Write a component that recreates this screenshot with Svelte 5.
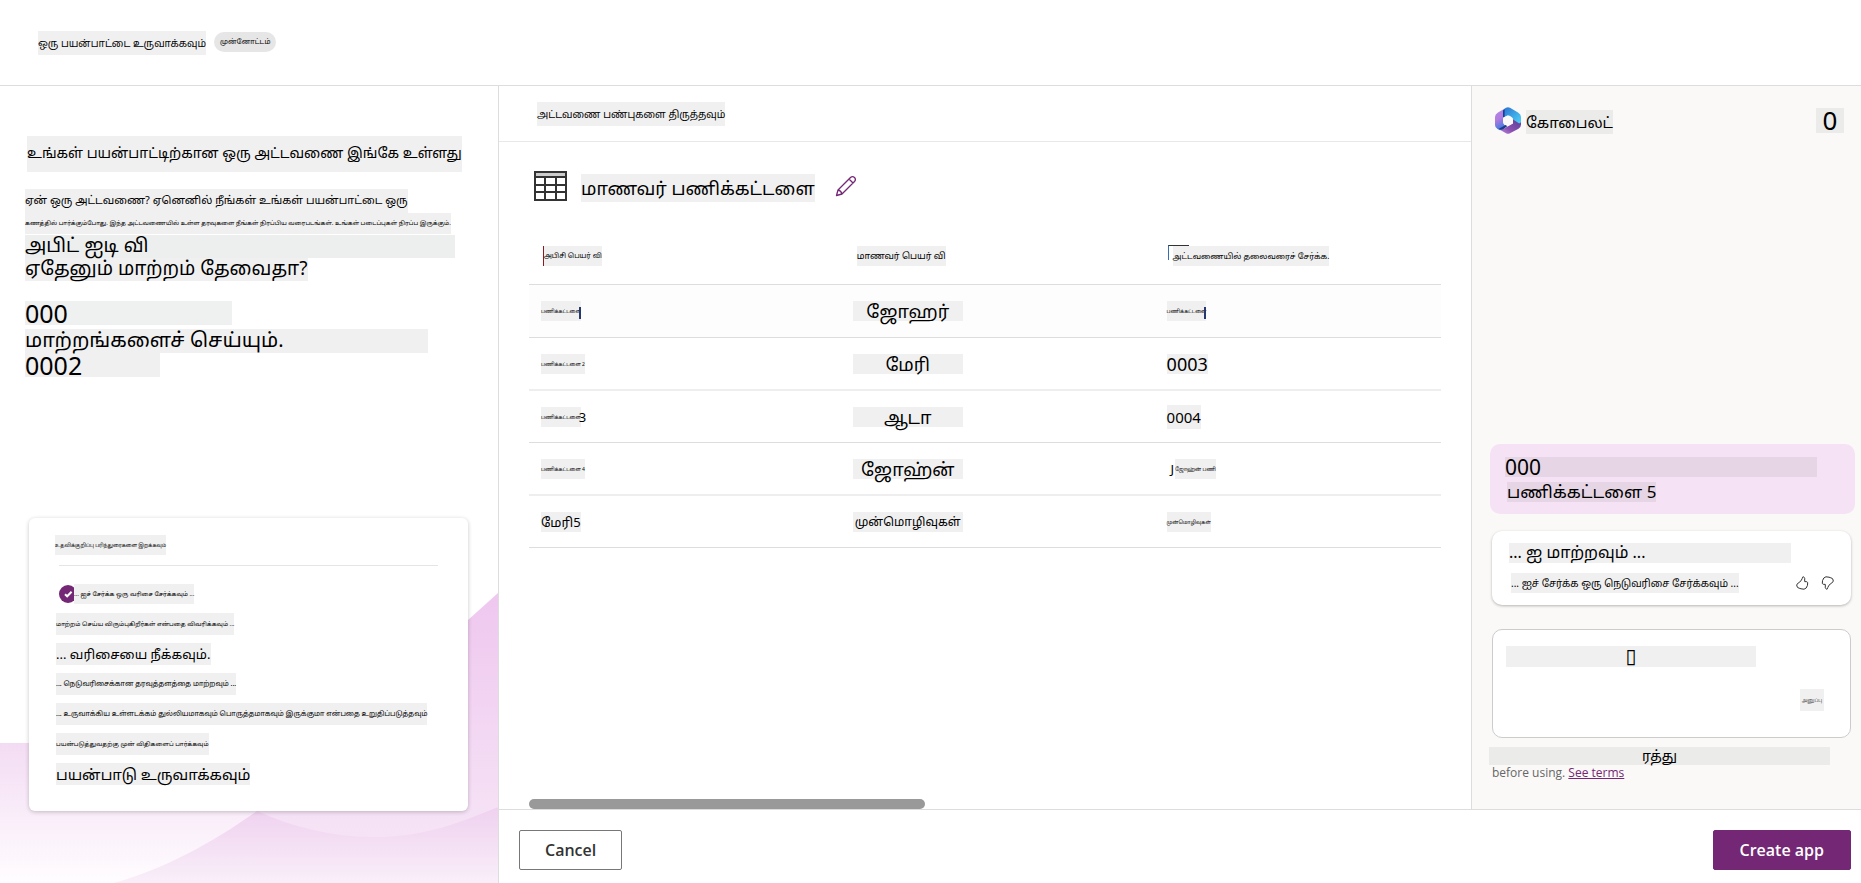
<script>
  const introBlocks = [
    { text: 'உங்கள் பயன்பாட்டிற்கான ஒரு அட்டவணை இங்கே உள்ளது', kind: 'intro-title' },
    { text: 'ஏன் ஒரு அட்டவணை? ஏனெனில் நீங்கள் உங்கள் பயன்பாட்டை ஒரு', kind: 'intro-lead' },
    { text: 'கணத்தில் பார்க்கும்போது. இந்த அட்டவணையில் உள்ள தரவுகளை நீங்கள் நிரப்பிய வரைபடங்கள். உங்கள் படைப்புகள் நிரப்ப இருக்கும்.', kind: 'intro-fine' },
    { text: 'அபிட் ஐடி வி', kind: 'intro-big wide' },
    { text: 'ஏதேனும் மாற்றம் தேவைதா?', kind: 'intro-big' },
    { text: '000', kind: 'intro-num first' },
    { text: 'மாற்றங்களைச் செய்யும்.', kind: 'intro-change' },
    { text: '0002', kind: 'intro-num' }
  ];

  const suggestions = [
    { text: 'மாற்றம் செய்ய விரும்புகிறீர்கள் என்பதை விவரிக்கவும் ...', size: 's6' },
    { text: '... வரிசையை நீக்கவும்.', size: 's13' },
    { text: '... நெடுவரிசைக்கான தரவுத்தளத்தை மாற்றவும் ...', size: 's7' },
    { text: '... உருவாக்கிய உள்ளடக்கம் துல்லியமாகவும் பொருத்தமாகவும் இருக்குமா என்பதை உறுதிப்படுத்தவும்', size: 's7 dark' },
    { text: 'பயன்படுத்துவதற்கு முன் விதிகளைப் பார்க்கவும்', size: 's6 dark' },
    { text: 'பயன்பாடு உருவாக்கவும்', size: 's15' }
  ];

  const rows = [
    { a: 'பணிக்கட்டளை', aSize: 's5', b: 'ஜோஹர்', bSize: 's18', c: 'பணிக்கட்டளை', cSize: 's5' },
    { a: 'பணிக்கட்டளை 2', aSize: 's5', b: 'மேரி', bSize: 's18', c: '0003', cSize: 's18' },
    { a: 'பணிக்கட்டளை', aSize: 's5', aTail: '3', b: 'ஆடா', bSize: 's18', c: '0004', cSize: 's15' },
    { a: 'பணிக்கட்டளை 4', aSize: 's5', b: 'ஜோஹ்ன்', bSize: 's18', cLead: 'J', c: 'ஜோஹ்ன் பணி', cSize: 's5' },
    { a: 'மேரி5', aSize: 's13', b: 'முன்மொழிவுகள்', bSize: 's12', c: 'முன்மொழிவுகள்', cSize: 's5' }
  ];

  let prompt = $state('▯');
  let added = $state(true);
</script>

<div class="page">
  <header class="topbar">
    <h1 class="chip s10 tall">ஒரு பயன்பாட்டை உருவாக்கவும்</h1>
    <span class="badge">முன்னோட்டம்</span>
  </header>

  <aside class="guide">
    <svg class="waves" viewBox="0 86 498 797" preserveAspectRatio="none" aria-hidden="true">
      <defs>
        <linearGradient id="w1" x1="0" y1="0" x2="0" y2="1">
          <stop offset="0" stop-color="#f3dcf3" /><stop offset="1" stop-color="#fffdff" />
        </linearGradient>
        <linearGradient id="w2" x1="0" y1="0" x2="0" y2="1">
          <stop offset="0" stop-color="#efc7ef" /><stop offset="1" stop-color="#f6e5f6" />
        </linearGradient>
        <linearGradient id="w3" x1="0" y1="0" x2="0" y2="1">
          <stop offset="0" stop-color="#efd1ef" /><stop offset="1" stop-color="#f9eff9" />
        </linearGradient>
      </defs>
      <path d="M0 743H340V883H0Z" fill="url(#w1)" />
      <path d="M498 593L468 620L257 811C300 860 420 860 498 807Z" fill="url(#w2)" />
      <path d="M257 811C212 843 164 869 114 883H498V807C460 823 425 836 380 837C335 838 295 828 257 811Z" fill="url(#w3)" />
    </svg>

    <div class="intro">
      {#each introBlocks as block}
        <p class="chip {block.kind}">{block.text}</p>
      {/each}
    </div>

    <section class="card">
      <h2 class="chip s5 dark">உதவிக்குறிப்பு பரிந்துரைகளை இறக்கவும்</h2>
      <hr />
      <label class="done">
        <input type="checkbox" bind:checked={added} />
        <svg class="tick" viewBox="0 0 18 18" aria-hidden="true"><path d="M6 9.2L8.2 11.3L12.6 6.8" /></svg>
        <span class="chip s6 dark">... ஐச் சேர்க்க ஒரு வரிசை சேர்க்கவும் ...</span>
      </label>
      <ul>
        {#each suggestions as item}
          <li><span class="chip {item.size}">{item.text}</span></li>
        {/each}
      </ul>
    </section>
  </aside>

  <main class="editor">
    <div class="tabs"><span class="chip s10 tall">அட்டவணை பண்புகளை திருத்தவும்</span></div>
    <div class="content">
      <div class="title">
        <svg class="grid-icon" viewBox="0 0 33 30" aria-hidden="true" shape-rendering="crispEdges">
          <path fill="#ccc" d="M2 2H31V5H2Z" />
          <path fill="#333" fill-rule="evenodd" d="M0 0H33V30H0ZM2 2V5H31V2ZM2 7V13H10V7ZM12 7V13H21V7ZM23 7V13H31V7ZM2 15V20H10V15ZM12 15V20H21V15ZM23 15V20H31V15ZM2 22V28H10V22ZM12 22V28H21V22ZM23 22V28H31V22Z" />
        </svg>
        <h2 class="chip table-name">மாணவர் பணிக்கட்டளை</h2>
        <button class="icon edit" aria-label="Edit">
          <svg viewBox="0 0 22 22" width="22" height="22"><path d="M1.500 20.500L3 15L15.500 2.500Q17.500 .700 19.500 2.500Q21.300 4.500 19.500 6.500L7 19L1.500 20.500ZM3 15Q6 15.500 7 19M14 4L18 8" /></svg>
        </button>
      </div>

      <table>
        <thead>
          <tr>
            <th scope="col"><span class="chip s7 caret">அபிசி பெயர் வி</span></th>
            <th scope="col"><span class="chip s9 dark">மாணவர் பெயர் வி</span></th>
            <th scope="col"><span class="chip s8 dark bracket">அட்டவணையில் தலைவரைச் சேர்க்க.</span></th>
          </tr>
        </thead>
        <tbody>
          {#each rows as row, i}
            <tr>
              <td>
                <div class="cell">
                  <span class="chip {row.aSize}" class:caret-end={i === 0}>{row.a}</span>
                  {#if row.aTail}<span class="digit tail">{row.aTail}</span>{/if}
                </div>
              </td>
              <td><span class="chip name {row.bSize}">{row.b}</span></td>
              <td>
                <div class="cell">
                  {#if row.cLead}<span class="digit lead">{row.cLead}</span>{/if}
                  <span class="chip {row.cSize}" class:caret-end={i === 0}>{row.c}</span>
                </div>
              </td>
            </tr>
          {/each}
        </tbody>
      </table>
      <div class="scroll"><div class="thumb"></div></div>
    </div>
  </main>

  <aside class="copilot">
    <div class="brand">
      <svg viewBox="0 0 26 27" width="26" height="27" aria-hidden="true">
        <defs>
          <linearGradient id="l1" x1="0" y1="0" x2=".3" y2="1"><stop offset="0" stop-color="#a88be8" /><stop offset=".5" stop-color="#b57ae0" /><stop offset="1" stop-color="#3f7be0" /></linearGradient>
          <linearGradient id="l2" x1="0" y1="0" x2="1" y2="1"><stop offset="0" stop-color="#2b6fd0" /><stop offset="1" stop-color="#4fd8f8" /></linearGradient>
          <linearGradient id="l3" x1="1" y1="0" x2="0" y2="1"><stop offset="0" stop-color="#5a3f98" /><stop offset=".6" stop-color="#8a50b0" /><stop offset="1" stop-color="#c08be8" /></linearGradient>
        </defs>
        <path d="M9 2L3 5.500Q0 7.200 0 10V18Q0 20.800 2.500 22L5 23.300L12 19.500Q8 18 8 14V6Q8 3.500 9 2Z" fill="url(#l1)" />
        <path d="M9 2L11 .700Q13 -.400 15 .700L23 5.500Q26 7.200 26 10V16.500Q25 19 22 17.500L18 13Q17 8.500 12.500 8.500L8 10.500V5Q8 3.200 9 2Z" fill="url(#l2)" />
        <path d="M26 15V17.500Q26 20.200 23.500 21.700L15 26.300Q13 27.400 11 26.300L3.500 22Q7 23 9.500 21.300L18 16.500V12.500L23.500 16Q25 17 26 15Z" fill="url(#l3)" />
        <path d="M8 3.600V10.500L9.600 9.700V2.300ZM3.500 22L10.600 18L12.200 19L8.500 22Q6 23.400 3.500 22Z" fill="#173d8c" />
        <path d="M13 8.500L17.700 11V16.300L13 19L8.300 16.300V11Z" fill="#faf9f8" />
      </svg>
      <h2 class="chip s15">கோபைலட்</h2>
      <button class="chip count" aria-label="Close">0</button>
    </div>

    <div class="chat">
      <div class="bubble">
        <span class="chip bubble-num">000</span>
        <span class="chip bubble-text">பணிக்கட்டளை 5</span>
      </div>

      <div class="reply">
        <span class="chip reply-title">... ஐ மாற்றவும் ...</span>
        <div class="reply-foot">
          <span class="chip s10">... ஐச் சேர்க்க ஒரு நெடுவரிசை சேர்க்கவும் ...</span>
          <div class="votes">
            <button class="icon" aria-label="Like"><svg viewBox="0 0 13 14" width="13" height="14"><path d="M7.500 .700Q6.300 .800 6.200 2.500Q5.500 5 3 6.500L1 8.200Q.500 8.800 .900 10L1.600 11.500Q3 12.200 5 12.800Q8.500 14 10.200 12Q12 9.500 11.700 6.500Q11.300 5.400 8.700 5.600Q9.300 1.500 7.500 .700Z" /></svg></button>
            <button class="icon" aria-label="Dislike"><svg class="down" viewBox="0 0 13 14" width="13" height="14"><path d="M7.500 .700Q6.300 .800 6.200 2.500Q5.500 5 3 6.500L1 8.200Q.500 8.800 .900 10L1.600 11.500Q3 12.200 5 12.800Q8.500 14 10.200 12Q12 9.500 11.700 6.500Q11.300 5.400 8.700 5.600Q9.300 1.500 7.500 .700Z" /></svg></button>
          </div>
        </div>
      </div>

      <div class="compose">
        <input type="text" aria-label="Message" bind:value={prompt} />
        <button class="chip send">அனுப்பு</button>
      </div>

      <div class="terms">
        <span class="chip terms-chip">ரத்து</span>
        <p>before using. <a href="#terms">See terms</a></p>
      </div>
    </div>
  </aside>

  <footer class="actions">
    <button class="btn">Cancel</button>
    <button class="btn primary">Create app</button>
  </footer>
</div>

<style>
  :global(body) { margin: 0; background: #fff; }
  .page, .page * { box-sizing: border-box; }
  .page {
    display: grid;
    grid-template: auto 1fr auto / minmax(0, 499fr) minmax(0, 972fr) minmax(0, 390fr);
    min-height: 100vh;
    overflow: hidden;
    font-family: "Noto Sans", "Noto Sans Tamil", "Open Sans", sans-serif;
    color: #000;
  }
  h1, h2, p, ul { margin: 0; padding: 0; font-weight: 400; }
  ul { list-style: none; }
  button { font-family: inherit; cursor: pointer; }

  .chip { display: block; width: fit-content; background: #f0f0f0; white-space: nowrap; line-height: 20px; border: 0; }
  .s5 { font-size: 5px; }
  .s6 { font-size: 6px; }
  .s7 { font-size: 7px; }
  .s8 { font-size: 8px; }
  .s9 { font-size: 9px; }
  .s10 { font-size: 10px; }
  .s12 { font-size: 12px; }
  .s13 { font-size: 13px; }
  .s15 { font-size: 15px; line-height: 24px; }
  .s18 { font-size: 18px; }
  .tall { line-height: 24px; }
  .dark { color: #000; }

  .topbar { grid-column: 1 / -1; display: flex; align-items: center; gap: 8px; height: 86px; padding: 0 38px; border-bottom: 1px solid #ddd; }
  .badge { padding: 0 6px; background: #e6e6e6; border-radius: 10px; font-size: 7px; line-height: 20px; margin-bottom: 2px; }

  .guide { position: relative; grid-row: 2 / 4; display: flex; flex-direction: column; justify-content: space-between; padding: 50px 30px 72px 25px; border-right: 1px solid #ddd; }
  .waves { position: absolute; inset: 0; width: 100%; height: 100%; }
  .intro, .card { position: relative; }
  .intro-title { margin: 0 0 17px 2px; padding-bottom: 3px; font-size: 14px; line-height: 33px; }
  .intro-lead { padding-bottom: 2px; font-size: 11px; line-height: 22px; }
  .intro-fine { min-width: 426px; margin-bottom: 1px; font-size: 6px; line-height: 21px; }
  .intro-big { padding-bottom: 2px; font-size: 19px; line-height: 21px; }
  .wide { width: 430px; background: #edefee; }
  .intro-num { width: 135px; font-size: 25px; line-height: 24px; }
  .first { width: 207px; margin: 20px 0 4px; background: #eff0f0; }
  .intro-change { width: 403px; padding-bottom: 2px; font-size: 20px; line-height: 22px; }

  .card { margin-left: 4px; padding: 17px 30px 26px 26px; background: #fff; border-radius: 6px; box-shadow: 0 1px 4px rgba(0, 0, 0, .22); }
  hr { height: 1px; margin: 10px 0 18px 4px; border: 0; background: #e5e5e5; }
  .done { position: relative; display: flex; align-items: center; margin: 0 0 9px 4px; }
  .done input { appearance: none; flex: none; width: 18px; height: 18px; margin: 0 -3px 0 0; border-radius: 50%; background: #742774; }
  .done input:not(:checked) { background: #ccc; }
  .tick { position: absolute; left: 0; width: 18px; height: 18px; fill: none; stroke: #fff; stroke-width: 2; }
  .done .chip { position: relative; }
  .card ul { display: flex; flex-direction: column; gap: 8px; padding-left: 1px; }
  .card li .chip { line-height: 22px; }

  .editor { display: flex; flex-direction: column; min-width: 0; }
  .tabs { display: flex; align-items: center; height: 56px; padding-left: 38px; border-bottom: 1px solid #e8e8e8; }
  .content { flex: 1; display: flex; flex-direction: column; padding: 26px 30px 0; }
  .title { display: flex; align-items: center; gap: 14px; height: 36px; padding-left: 5px; }
  .grid-icon { width: 33px; height: 30px; }
  .table-name { font-size: 18px; line-height: 28px; margin-top: 4px; }
  .icon { display: flex; padding: 0; border: 0; background: none; }
  .edit { margin-left: 6px; }
  .icon path { fill: none; stroke: #742774; stroke-width: 1.3; stroke-linejoin: round; }
  .votes .icon path { stroke: #333; stroke-width: 1; }

  table { width: 100%; margin-top: 25px; border-collapse: separate; border-spacing: 0; table-layout: fixed; }
  th, td { padding: 0 12px; border-bottom: 1px solid #ddd; text-align: left; font-weight: 400; }
  th { height: 56px; padding-bottom: 2px; padding-left: 14px; }
  td { height: 52px; }
  tbody tr:first-child td { background: #fdfdfd; height: 53px; }
  tbody tr:nth-child(even) td { border-bottom: 2px solid #eee; height: 53px; }
  th:nth-child(1) { width: 34.400%; }
  th:nth-child(2) { width: 34.200%; }
  td:nth-child(2) { padding-left: 10px; }
  .cell { display: flex; align-items: center; }
  .digit { font-size: 13px; line-height: 20px; }
  .tail { margin-left: -2px; }
  .lead { padding: 0 1px 0 4px; }
  .name { width: 110px; text-align: center; }
  .caret { border-left: 1px solid #8b1a1a; }
  .caret-end { position: relative; }
  .caret-end::after { content: ""; position: absolute; right: 0; bottom: 2px; width: 2px; height: 12px; background: #26386e; }
  .bracket { position: relative; margin-left: 4px; }
  .bracket::before { content: ""; position: absolute; left: -5px; top: -1px; width: 20px; height: 14px; border: 1px solid #333; border-right: 0; border-bottom: 0; border-left-color: #3a6db0; }
  .scroll { margin-top: auto; }
  .thumb { width: 43.400%; height: 10px; border-radius: 5px; background: #999; }

  .copilot { display: flex; flex-direction: column; justify-content: space-between; padding: 20px 6px 28px 18px; border-left: 1px solid #ddd; background: #faf9f8; min-width: 0; }
  .brand { display: flex; align-items: center; gap: 5px; padding: 0 11px 0 5px; }
  .brand .chip { background: #ebebea; margin-top: 4px; }
  .brand .count { width: 28px; margin: 0 0 0 auto; padding: 0; font-size: 26px; line-height: 25px; }
  .bubble { height: 70px; padding: 13px 15px; border-radius: 10px; background: #f6e2f5; }
  .bubble .chip { background: #e6d6e5; }
  .bubble .bubble-num { width: 312px; max-width: 100%; font-size: 21px; line-height: 20px; margin-bottom: 5px; }
  .bubble-text { margin-left: 2px; font-size: 17px; }
  .reply { margin: 17px 4px 24px 2px; padding: 12px 17px; border-radius: 10px; background: #fff; box-shadow: 0 1px 3px rgba(0, 0, 0, .28); }
  .reply-title { width: 282px; max-width: 100%; padding-bottom: 2px; font-size: 16px; line-height: 18px; }
  .reply-foot { display: flex; justify-content: space-between; align-items: center; margin: 10px 0 0 2px; }
  .votes { display: flex; gap: 12px; }
  .down { transform: rotate(180deg); }
  .compose { display: flex; flex-direction: column; height: 109px; margin: 0 4px 9px 2px; padding: 16px 26px 16px 13px; border: 1px solid #ccc; border-radius: 10px; background: #fff; }
  .compose input { width: 250px; max-width: 100%; height: 21px; padding: 0; border: 0; background: #f0f0f0; color: #000; font: 20px/21px "DejaVu Sans", sans-serif; text-align: center; }
  .send { margin: 22px 0 0 auto; padding: 0; width: 24px; font-size: 5px; line-height: 22px; color: #555; }
  .terms-chip { width: 341px; max-width: 100%; background: #ebebea; font-size: 14px; line-height: 18px; text-align: center; margin-left: -1px; }
  .terms p { padding-left: 2px; font: 12px/16px "Open Sans", sans-serif; color: #666; }
  .terms a { color: #742774; }

  .actions { grid-column: 2 / -1; display: flex; justify-content: space-between; align-items: center; height: 74px; padding: 6px 10px 0 20px; border-top: 1px solid #ddd; background: #fff; }
  .btn { height: 40px; padding: 0 25px; border: 1px solid #777; border-radius: 2px; background: #fff; color: #333; font: 600 16px/20px "Open Sans", sans-serif; }
  .primary { padding: 0 26px; border-color: #742774; background: #742774; color: #fff; }
</style>
